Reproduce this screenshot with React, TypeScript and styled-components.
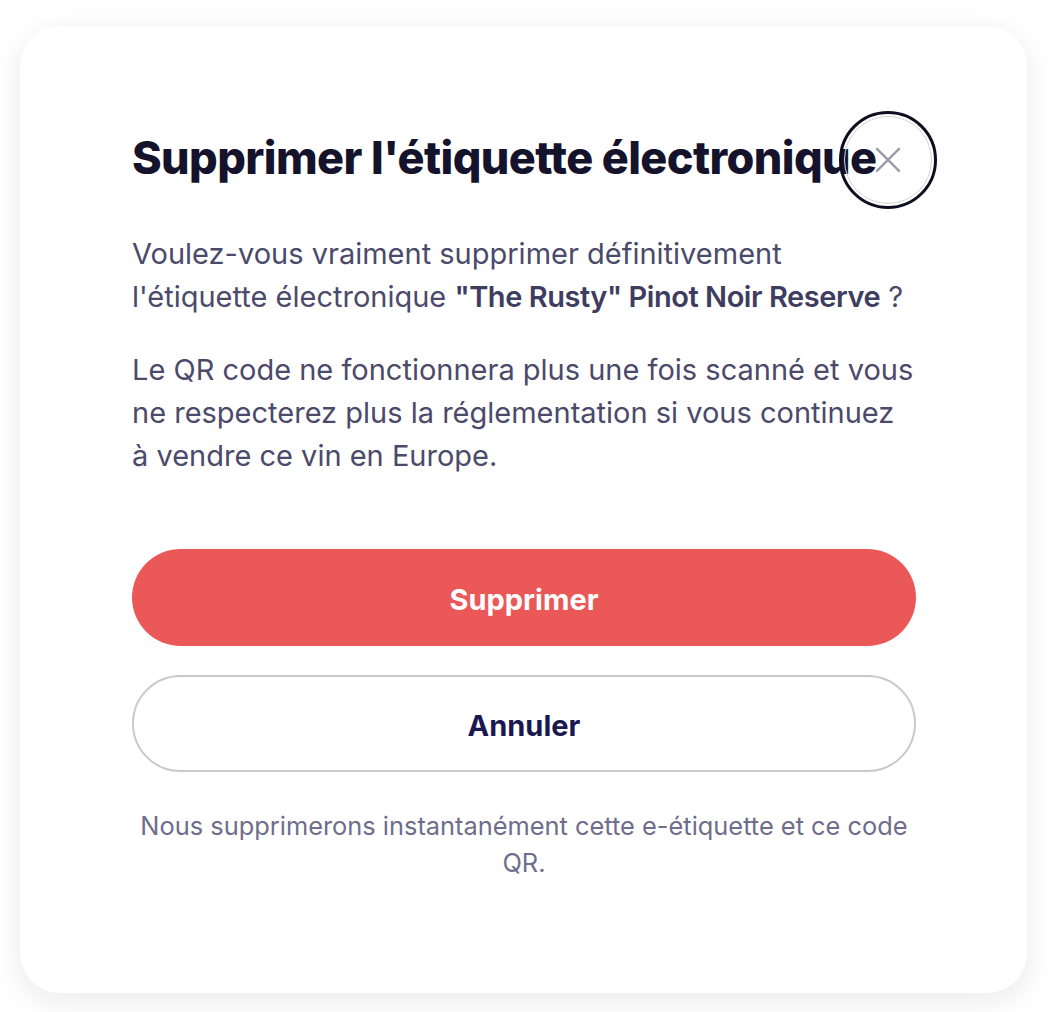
import React from 'react';
import styled, {createGlobalStyle} from 'styled-components';

const GlobalStyle = createGlobalStyle`
    html, body {
        margin: 0;
        padding: 0;
        background: #ffffff;
    }
    body {
        font-family: Inter, "Noto Sans", sans-serif;
        -webkit-font-smoothing: antialiased;
    }
`;

const Page = styled.div`
    padding: 26px 21px 20px 20px;
`;

const Card = styled.div`
    position: relative;
    box-sizing: border-box;
    width: 1007px;
    min-height: 966px;
    background: #ffffff;
    border-radius: 40px;
    box-shadow: 0 8px 30px rgba(20, 19, 43, 0.09);
    padding: 107px 111px 112px 112px;
    display: flex;
    flex-direction: column;
`;

const Header = styled.div`
    position: relative;
    display: flex;
    align-items: center;
`;

const Title = styled.h2`
    margin: 0;
    font-size: 45px;
    line-height: 50px;
    font-weight: 800;
    letter-spacing: -0.6px;
    color: #14132b;
    white-space: nowrap;
`;

const CloseButton = styled.button`
    position: absolute;
    right: -21px;
    top: 50%;
    transform: translateY(-48%);
    width: 98px;
    height: 98px;
    border-radius: 50%;
    border: 3px solid #0f0e1f;
    background: transparent;
    padding: 0;
    display: flex;
    align-items: center;
    justify-content: center;
    cursor: pointer;

    &::before {
        content: "";
        position: absolute;
        inset: 2px;
        border-radius: 50%;
        border: 1px solid #d4d4d8;
    }
`;

const Body = styled.div`
    margin-top: 49px;
    display: flex;
    flex-direction: column;
    gap: 30px;
`;

const Paragraph = styled.p`
    margin: 0;
    font-size: 29px;
    line-height: 43px;
    color: #4b4a6a;
`;

const Strong = styled.span`
    font-weight: 600;
    letter-spacing: -0.45px;
    color: #3e3d5f;
`;

const Actions = styled.div`
    margin-top: 72px;
    display: flex;
    flex-direction: column;
    gap: 29px;
`;

const Button = styled.button<{ $variant: 'danger' | 'ghost' }>`
    box-sizing: border-box;
    width: 100%;
    height: 97px;
    border-radius: 49px;
    font-family: inherit;
    font-size: 29px;
    font-weight: 700;
    padding-top: 4px;
    cursor: pointer;
    background: ${p => p.$variant === 'danger' ? '#ea5858' : '#ffffff'};
    color: ${p => p.$variant === 'danger' ? '#ffffff' : '#1a1850'};
    border: ${p => p.$variant === 'danger' ? 'none' : '2px solid #c8c8ce'};
`;

const Footnote = styled.p`
    margin: 35px 0 0;
    text-align: center;
    font-size: 25.4px;
    line-height: 37px;
    color: #6e6d8c;
`;

export default function App() {
    return (
        <Page>
            <GlobalStyle/>
            <Card>
                <Header>
                    <Title>Supprimer l'étiquette électronique</Title>
                    <CloseButton aria-label="Fermer">
                        <svg width="28" height="28" viewBox="0 0 28 28" fill="none">
                            <path d="M3 3 L25 25 M25 3 L3 25" stroke="#9c9ba8" strokeWidth="2.4" strokeLinecap="round"/>
                        </svg>
                    </CloseButton>
                </Header>
                <Body>
                    <Paragraph>
                        Voulez-vous vraiment supprimer définitivement l'étiquette électronique <Strong>"The Rusty" Pinot Noir Reserve</Strong> ?
                    </Paragraph>
                    <Paragraph>
                        Le QR code ne fonctionnera plus une fois scanné et vous ne respecterez plus la réglementation si vous continuez à vendre ce vin en Europe.
                    </Paragraph>
                </Body>
                <Actions>
                    <Button $variant="danger">Supprimer</Button>
                    <Button $variant="ghost">Annuler</Button>
                </Actions>
                <Footnote>
                    Nous supprimerons instantanément cette e-étiquette et ce code QR.
                </Footnote>
            </Card>
        </Page>
    );
}
